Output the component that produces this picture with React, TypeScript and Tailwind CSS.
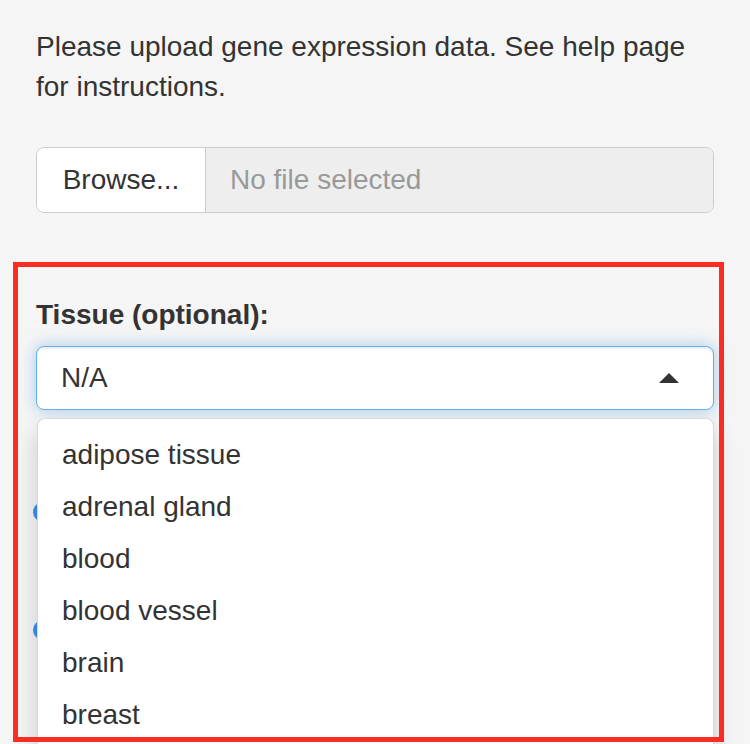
// Upload panel with an open tissue select menu
const tissues = ["adipose tissue", "adrenal gland", "blood", "blood vessel", "brain", "breast"]

export default function App() {
  return (
    <div className="relative h-[744px] overflow-hidden bg-[#f5f5f5] font-['Liberation_Sans',Arial,sans-serif] text-[#333]">
      <div className="ml-[36px] w-[678px] pt-[27px]">
        <p className="text-[28px] leading-[40px]">
          Please upload gene expression data. See help page for instructions.
        </p>

        {/* file input */}
        <div className="mt-[40px] flex h-[66px] overflow-hidden rounded-[8px] border border-[#ccc]">
          <div className="flex w-[169px] items-center justify-center border-r border-[#ccc] bg-white text-[28px] leading-[40px]">
            Browse...
          </div>
          <div className="flex flex-1 items-center bg-[#eee] pl-[24px] text-[28px] leading-[40px] text-[#999]">
            No file selected
          </div>
        </div>

        {/* tissue select */}
        <label className="mt-[82px] mb-[11px] block text-[28px] font-bold leading-[40px]">
          Tissue (optional):
        </label>
        <div className="relative">
          <div className="flex h-[64px] items-center justify-between rounded-[8px] border border-[#66afe9] bg-white pl-[24px] pr-[34px] text-[28px] leading-[40px] shadow-[inset_0_2px_2px_rgba(0,0,0,0.075),0_0_16px_rgba(102,175,233,0.6)]">
            <span>N/A</span>
            <span className="h-0 w-0 border-x-[10px] border-b-[10px] border-x-transparent border-b-[#333]" />
          </div>

          {/* stuff behind the menu */}
          <div className="mt-[92px] h-[20px] w-[20px] -ml-[3px] rounded-full bg-[#3b8ff0]" />
          <div className="mt-[98px] h-[20px] w-[20px] -ml-[3px] rounded-full bg-[#3b8ff0]" />

          <ul className="absolute left-[1px] right-0 top-[72px] z-10 rounded-t-[8px] border border-b-0 border-[rgba(0,0,0,0.15)] bg-white pt-[10px] pb-[10px] shadow-[0_12px_24px_rgba(0,0,0,0.175)]">
            {tissues.map((t) => (
              <li key={t} className="px-[24px] py-[6px] text-[28px] leading-[40px]">
                {t}
              </li>
            ))}
          </ul>
        </div>
      </div>

      {/* red annotation box */}
      <div className="pointer-events-none absolute left-[13px] top-[262px] z-20 h-[480px] w-[711px] border-[5px] border-[#fb2c22]" />
    </div>
  )
}
